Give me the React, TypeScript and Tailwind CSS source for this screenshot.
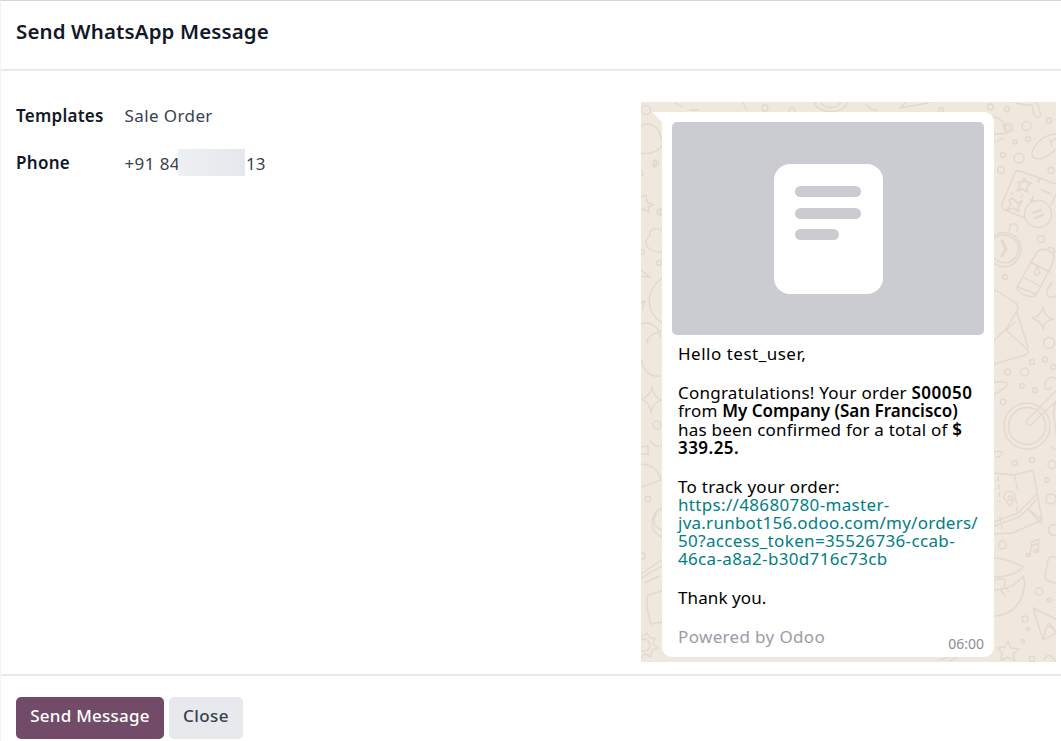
import type { ReactNode } from "react";

function Doodles() {
  const circles: [number, number, number][] = [
    [990.5, 107, 3], [1007, 109, 2.5], [1026.5, 126, 4.5], [1049, 120.5, 2.5], [1028, 139, 2.5],
    [1015, 142, 2], [1003, 155, 2.5], [1019, 158, 5], [1001, 170, 3.5], [1051, 170.5, 3],
    [1041, 239, 3.5], [1005, 277, 2.5], [1049, 343, 5.5], [1032, 362, 2.5], [1045, 359.5, 2.5],
    [1007.5, 372, 3], [1024.5, 372, 4], [1053.5, 367, 2.5], [1022, 386, 2.2], [1035, 390, 2.5],
    [1003, 402, 2.7], [1014.5, 463, 2.5], [1032, 460, 2.5], [1052, 464.5, 4], [1047, 480, 2.2],
    [1051, 499, 5], [1054, 530, 5.5], [1002.5, 545, 4], [1039, 591.5, 3.7], [1049, 600, 2],
    [1025, 619, 3], [1028, 629, 1.5], [1023, 641, 1.5], [1032, 659, 2.7], [765, 108, 3],
    [792, 111, 3], [941, 110, 2.5], [646, 110, 4.5], [656, 163, 2.5], [660, 212, 3], [659, 263, 2.5],
    [657, 425, 4], [648, 499, 2.7], [642, 556, 3], [640, 173, 3], [642, 252, 2.5],
  ];
  return (
    <svg
      viewBox="641 102 415 560"
      className="absolute inset-0 h-full w-full"
      fill="none"
      stroke="#e2d8cf"
      strokeWidth="1.4"
      strokeLinecap="round"
      strokeLinejoin="round"
      aria-hidden="true"
    >
      {circles.map(([x, y, r]) => (
        <circle key={`${x}-${y}`} cx={x} cy={y} r={r} />
      ))}
      {/* hat and hammer */}
      <path d="M994 117C1003 119 1005 124 1006 130M994 134C1003 134 1012 133 1013 129C1014 123 1006 121 1003 126M994 143L1003 138M1016 103C1023 106 1028 104 1032 105L1034 115C1036 119 1042 118 1040 112L1037 103" />
      <circle cx="1007" cy="128" r="3" />
      {/* leaf */}
      <path d="M1056 134C1041 135 1032 147 1032 155C1034 162 1046 159 1056 149M1051 142L1056 138M1052 146L1050 140" />
      {/* calculator */}
      <path d="M1056 184L1020 171C1017 170 1015 172 1014 175L1002 204C1001 208 1003 209 1005 210L1025 218M1051 205L1056 194" />
      <circle cx="1038" cy="214" r="13.5" />
      <path d="M1033 213L1041 210M1035 218L1043 215" strokeWidth="2.2" />
      <path d="M1024 178L1026 182L1031 183L1027 187L1027 192L1023 189L1017 191L1020 186L1018 182L1023 182ZM1013 198L1017 203L1022 201L1018 207L1019 212L1014 208L1007 210L1011 204L1009 200ZM1042 190L1051 194M1030 200L1036 201M1033 197L1031 202M1011 193L1013 194M1023 195L1021 197M1040 178L1038 182" strokeWidth="1.7" />
      {/* stopwatch */}
      <path d="M994 236C1002 229 1017 234 1020 243C1023 253 1017 263 1010 266C1003 268 998 266 994 263" />
      <path d="M994 238C1002 232 1014 236 1018 244C1020 252 1016 259 1010 262C1003 264 998 262 994 258M1009 231L1010 225C1013 222 1020 225 1017 231" />
      <path d="M1002 241L1006 249L1002 256" strokeWidth="3" />
      {/* bottle */}
      <path d="M1038 251C1043 247 1055 251 1054 258L1051 267L1036 295C1031 299 1018 294 1017 287L1031 262ZM1030 262L1050 272M1023 277L1040 286M1018 287L1036 294M1047 250C1048 246 1056 247 1054 253M1037 267C1033 273 1034 276 1038 275C1041 273 1040 270 1037 267Z" />
      <path d="M1052 282C1046 291 1045 295 1050 297C1054 298 1056 296 1057 294" />
      {/* envelope */}
      <path d="M994 289L1016 303Q1019 306 1017 311L1006 329L994 341M1006 330L1028 350Q1030 353 1025 355L994 364M1017 313L1028 347M1006 330L1015 322" />
      <path d="M1043 307Q1044 317 1053 319Q1044 321 1043 329Q1041 321 1032 318Q1041 316 1043 307Z" />
      {/* banjo */}
      <path d="M994 382L1006 382Q1009 384 1005 388L994 395M1056 391L1026 421Q1026 426 1031 425L1056 401M1045 388C1044 378 1052 375 1056 379M1045 388Q1049 392 1051 387" />
      <circle cx="1027" cy="426" r="18.5" />
      <circle cx="1027" cy="426" r="23" />
      <path d="M1056 402C1051 412 1055 421 1056 433M1051 447L1056 450M994 452C1006 449 1004 457 996 457" />
      {/* map */}
      <path d="M994 473L1014 475L1033 470L1042 520L1012 533L994 534M994 522L1018 513L1036 495M994 526L1019 517L1028 509L1041 523M1037 499L1028 509L1041 519" />
      <path d="M998 477L1000 502M1015 477L1018 492M1016 499L1017 512M1000 517L1003 532" strokeDasharray="4 4" />
      <path d="M1010 506L1004 498C1003 490 1014 489 1015 497Z" />
      <circle cx="1010" cy="498" r="2" />
      {/* music note */}
      <path d="M1030 555L1032 542L1039 539L1038 550M1032 546L1039 543" />
      <ellipse cx="1028" cy="555" rx="2" ry="1.5" />
      <ellipse cx="1036" cy="551" rx="2" ry="1.5" />
      {/* fruit */}
      <path d="M994 558C1007 558 1017 564 1023 567C1020 572 1009 577 994 577M1023 576C1028 588 1021 614 995 616M1023 576C1017 584 1010 589 994 590M994 581C1001 576 1008 579 1004 586M1001 590L1005 596M1007 588L1009 592M1056 557L1050 557C1047 558 1047 569 1045 576Q1045 581 1055 583" />
      <path d="M1033 608L1056 619M1033 608L1043 640L1056 633M1043 640L1047 625L1054 629M1056 632L1049 623" />
      {/* star */}
      <path d="M1008 641L1011 648L1019 649L1013 654L1015 661L1008 657L1001 660L1002 653L998 648L1005 647ZM1044 660C1047 652 1053 656 1055 661" />
      {/* narrow strip left of the message */}
      <path d="M641 126C650 120 660 129 660 136Q667 145 656 151Q648 155 641 153M654 160Q659 163 654 168Q652 163 654 160M641 197L646 195L647 202L653 205L648 207L649 212L642 209M662 208Q658 212 662 216M662 231C657 226 648 229 650 236C642 242 646 252 662 252M641 270L650 277L641 276M662 278C646 290 644 311 662 323M641 303L645 301L642 309M641 324C653 320 660 330 660 337M648 342C645 346 645 335 662 331" />
      <path d="M641 360Q646 378 660 376M652 387Q653 397 662 400Q653 402 651 413Q650 402 641 399Q650 397 652 387M641 447L648 446V454H641M650 440Q655 449 662 445M641 464Q657 465 661 480L641 487" />
      <path d="M662 508C649 514 649 532 662 537M656 514Q650 525 662 530M641 574L661 560M641 578L662 566M645 583L659 576M648 595L662 591M648 595Q645 606 651 624L662 622M641 637L647 633L650 638L655 638L653 644L658 648L652 650L651 657L645 654L641 657" />
      <circle cx="644" cy="645" r="6" />
      {/* edges above and below the message */}
      <path d="M815 103C818 114 843 115 847 103M821 103C826 109 837 109 840 103M900 108L905 103M900 108L928 103M866 104Q870 111 877 110M690 110H698M675 103L682 107M743 103L747 110M940 660L952 656M949 661L958 657" />
    </svg>
  );
}

function Line({ children, className }: { children: ReactNode; className: string }) {
  return (
    <div className="h-[18px] leading-[18px]">
      <span className={className}>{children}</span>
    </div>
  );
}

export default function App() {
  return (
    <div className="flex h-[741px] w-[1061px] flex-col overflow-hidden whitespace-nowrap border-l border-t border-l-[#f3f3f4] border-t-[#d5d5d7] bg-white font-['Noto_Sans','Open_Sans',sans-serif] text-[17px] text-[#111827]">
      <header className="flex h-[70px] shrink-0 items-start border-b-2 border-[#e9e9eb] pl-[15px] pt-[15px]">
        <h1 className="text-[20.5px] font-semibold leading-[30px] tracking-[0.12px]">Send WhatsApp Message</h1>
      </header>

      <main className="flex h-[603px] shrink-0 justify-between pr-[5px] pt-[31px]">
        <div className="mt-[0.5px] grid h-[90px] grid-cols-[108.5px_auto] grid-rows-[26px_26px] gap-y-[22px] pl-[15px] leading-[26px]">
          <label className="pt-[0.5px] font-semibold tracking-[0.25px]">Templates</label>
          <span className="pt-[0.5px] tracking-[0.4px] text-[#374151]">Sale Order</span>
          <label className="-mt-[0.5px] font-semibold tracking-[0.3px]">Phone</label>
          <span className="flex items-center pt-[0.5px] text-[#374151]">
            <span className="w-[53.5px] tracking-[0.4px]">+91 84</span>
            <span className="-mt-[3px] h-[27px] w-[67px] bg-linear-to-r from-[#eef0f2] to-[#e4e8ec]" />
            <span className="pl-px">13</span>
          </span>
        </div>

        <section className="relative h-[560px] w-[415px] bg-[#f0e7df] pl-[21px] pt-[10px]">
          <Doodles />
          <svg className="absolute left-[11px] top-[10px] h-[10px] w-[11px]" viewBox="0 0 11 10">
            <path d="M0 0H11V10H10Z" fill="#fff" />
          </svg>
          <article className="relative h-[545px] w-[332px] rounded-[10px] rounded-tl-none bg-white p-[10px] text-black">
            <div className="flex h-[213px] items-start justify-center rounded-[5px] bg-[#cbccd2] pt-[42px]">
              <div className="flex h-[130px] w-[109px] flex-col gap-[10.5px] rounded-[16px] bg-white pl-[21px] pt-[22px]">
                <span className="h-[11px] w-[66px] rounded-full bg-[#cbccd2]" />
                <span className="h-[11px] w-[66px] rounded-full bg-[#cbccd2]" />
                <span className="h-[11px] w-[44px] rounded-full bg-[#cbccd2]" />
              </div>
            </div>
            <div className="flex flex-col pl-[6px] pt-[10px]">
              <Line className="tracking-[0.5px]">Hello test_user,</Line>
              <div className="mt-[21px]">
                <Line className="tracking-[0.24px]">Congratulations! Your order <b className="font-semibold tracking-[0.5px]">S00050</b></Line>
                <Line className="tracking-[0.2px]">from <b className="font-semibold tracking-[0px]">My Company (San Francisco)</b></Line>
                <div className="mt-px">
                  <Line className="tracking-[0.22px]">has been confirmed for a total of <b className="font-semibold">$</b></Line>
                </div>
                <Line className="font-semibold tracking-[0.45px]">339.25.</Line>
              </div>
              <div className="mt-[21px]">
                <Line className="tracking-[0.27px]">To track your order:</Line>
                <a className="text-[#017e84]">
                  <Line className="tracking-[0.33px]">https://48680780-master-</Line>
                  <Line className="tracking-[0.25px]">jva.runbot156.odoo.com/my/orders/</Line>
                  <Line className="tracking-[0.35px]">50?access_token=35526736-ccab-</Line>
                  <Line className="tracking-[0.33px]">46ca-a8a2-b30d716c73cb</Line>
                </a>
              </div>
              <div className="mt-[21px]">
                <Line className="tracking-[0.1px]">Thank you.</Line>
              </div>
              <div className="mt-[21px] text-[#9a9ca5]">
                <Line className="tracking-[0.35px]">Powered by Odoo</Line>
              </div>
            </div>
            <time className="absolute bottom-[4px] right-[10px] text-[14px] leading-[18px] text-[#8b8d94]">06:00</time>
          </article>
        </section>
      </main>

      <footer className="flex grow items-start gap-[5px] border-t-2 border-[#e9e9eb] pl-[15px] pt-[20.5px]">
        <button className="h-[42px] w-[148px] rounded-[5px] bg-[#714b67] pb-[3px] font-medium tracking-[0.25px] text-white">Send Message</button>
        <button className="h-[42px] w-[74px] rounded-[5px] bg-[#e7e9ed] pb-[3px] font-medium tracking-[0.4px] text-[#374151]">Close</button>
      </footer>
    </div>
  );
}
